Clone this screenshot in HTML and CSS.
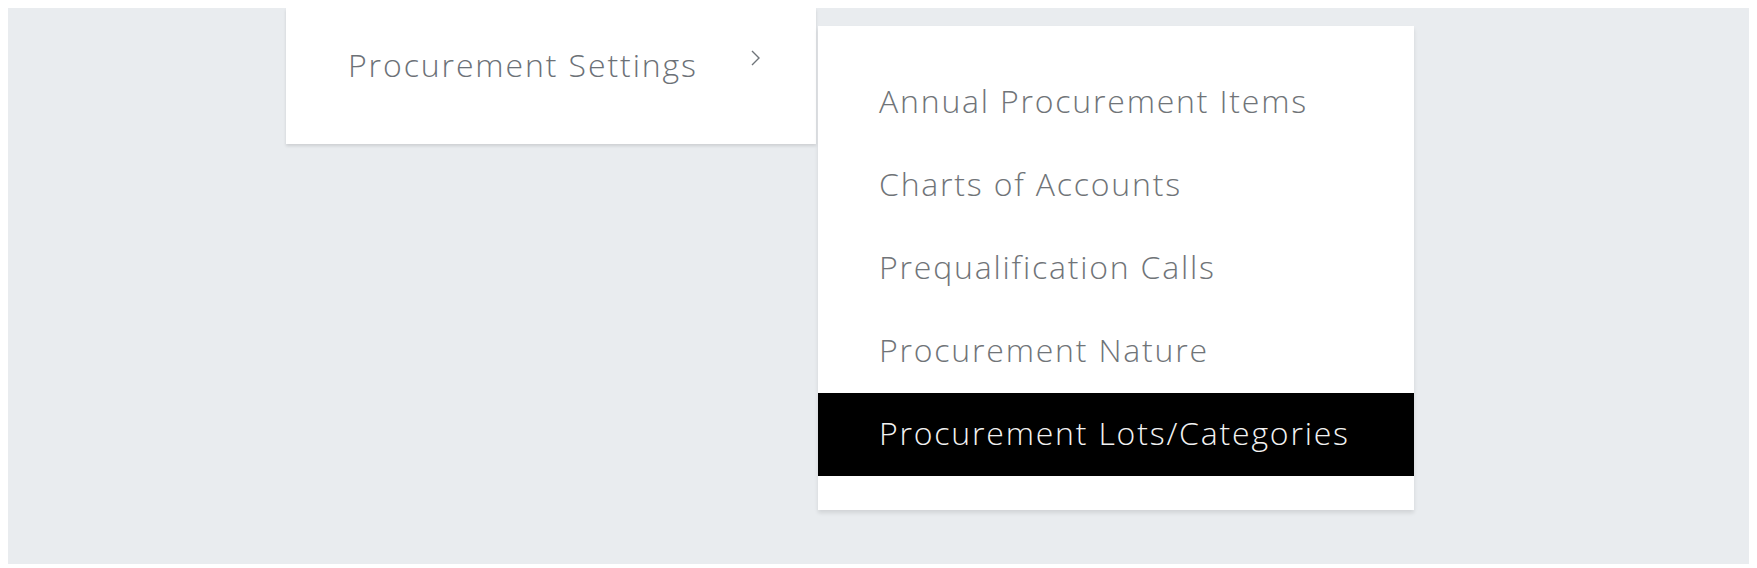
FILE: index.html
```html
<!DOCTYPE html>
<html lang="en">
  <head>
    <meta charset="UTF-8" />
    <meta name="viewport" content="width=device-width, initial-scale=1.0" />
    <title>Procurement Menu</title>
    <link rel="stylesheet" href="styles.css">
  </head>
  <body>
    <div class="page">
      <div class="menu">
        <div class="menu-item">
          <span>Procurement Settings</span>
          <svg class="chevron" width="13" height="18" viewBox="0 0 13 18">
            <path d="M3 2 L10 9 L3 16" fill="none" stroke="#6f7479" stroke-width="1.4" />
          </svg>
        </div>
      </div>

      <div class="submenu">
        <div class="submenu-item">Annual Procurement Items</div>
        <div class="submenu-item">Charts of Accounts</div>
        <div class="submenu-item">Prequalification Calls</div>
        <div class="submenu-item">Procurement Nature</div>
        <div class="submenu-item active">Procurement Lots/Categories</div>
      </div>
    </div>
  </body>
</html>
```

FILE: styles.css
```css
body {
  margin: 8px;
  background: #ffffff;
  font-family: "Open Sans", "Liberation Sans", sans-serif;
  font-weight: 300;
}

.page {
  display: flex;
  align-items: flex-start;
  height: 556px;
  padding-left: 278px;
  background: #e9ecef;
}

.menu {
  width: 530px;
  box-sizing: border-box;
  padding: 15px 54px 38px 62px;
  background: #ffffff;
  box-shadow: 0 2px 3px rgba(0, 0, 0, 0.12);
}

.menu-item {
  display: flex;
  justify-content: space-between;
  align-items: center;
  height: 83px;
  font-size: 32px;
  letter-spacing: 1.9px;
  color: #6c7177;
}

.chevron {
  margin-top: -14px;
}

.submenu {
  width: 596px;
  margin-top: 18px;
  margin-left: 2px;
  padding: 35px 0 34px;
  background: #ffffff;
  box-shadow: 0 3px 4px rgba(0, 0, 0, 0.1);
}

.submenu-item {
  height: 79px;
  line-height: 79px;
  padding: 0 0 4px 61px;
  font-size: 32px;
  letter-spacing: 1.8px;
  color: #707478;
}

.submenu-item.active {
  background: #000000;
  color: #f2f2f2;
}
```
